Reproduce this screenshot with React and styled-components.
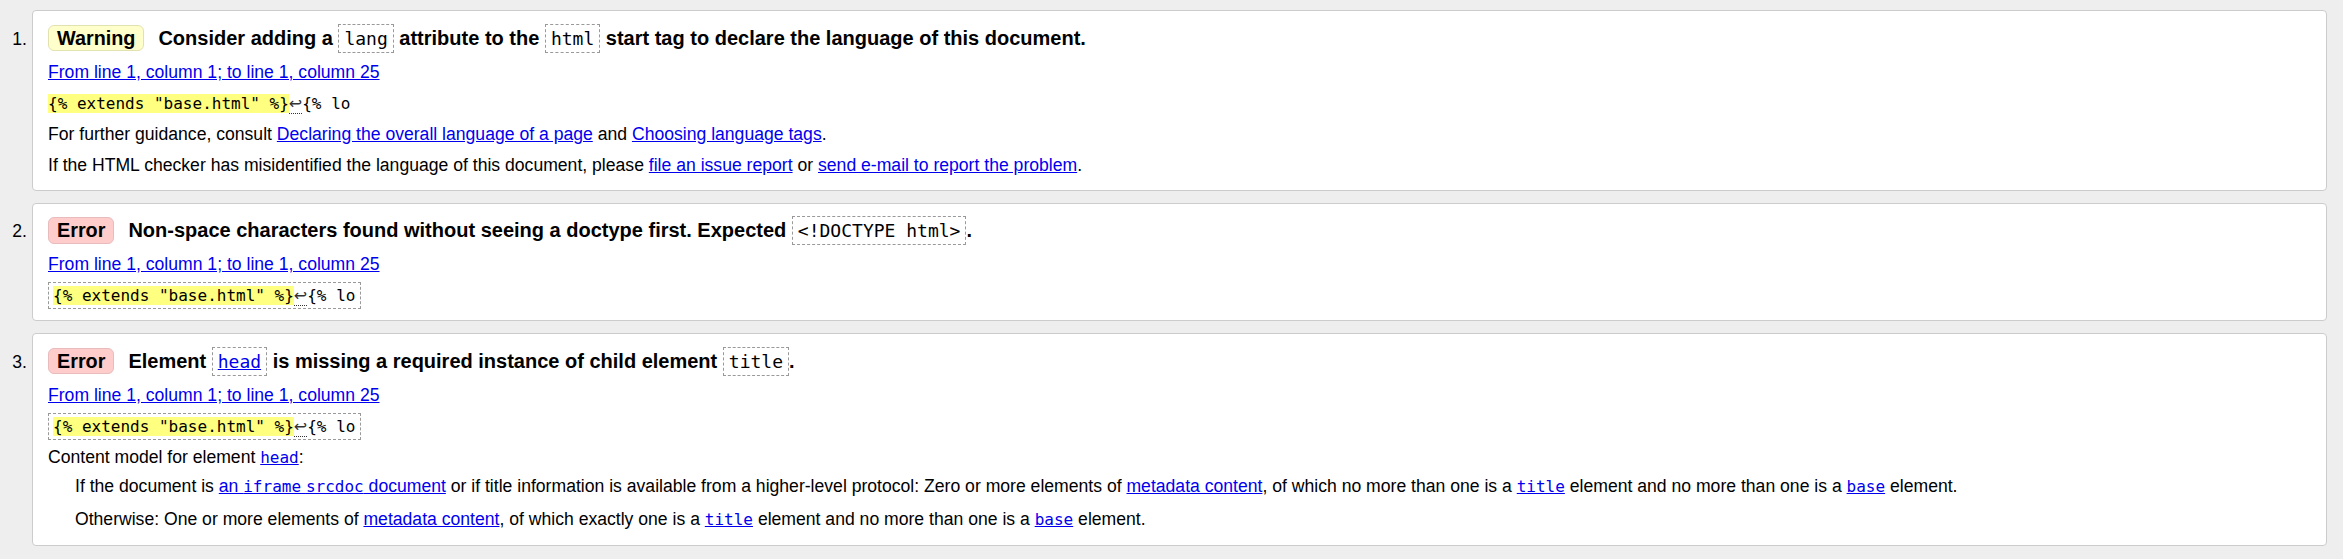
import styled, { createGlobalStyle } from "styled-components";

const GlobalStyle = createGlobalStyle`
  body {
    margin: 0;
    background: #eee;
    color: #000;
    font-family: "Liberation Sans", Arial, sans-serif;
    font-size: 17.6px;
  }
`;

const MessageList = styled.ol`
  list-style: none;
  margin: 10px 16px 0 0;
  padding: 0;
  display: flex;
  flex-direction: column;
  gap: 12px;
`;

const MessageItem = styled.li`
  display: grid;
  grid-template-columns: 32px 1fr;
  align-items: baseline;
`;

const Num = styled.span`
  text-align: right;
  padding-right: 5px;
  line-height: 1;
`;

const Card = styled.div`
  background: #fff;
  border: 1px solid #ccc;
  border-radius: 4px;
  padding: 12.5px 15px 14px;
`;

const Title = styled.p`
  margin: 0;
  font-weight: bold;
  font-size: 20px;
  line-height: 28px;
`;

const Badge = styled.strong`
  display: inline-block;
  margin-right: 14px;
  padding: 1px 8px;
  font-size: 19.8px;
  line-height: 22.5px;
  border-radius: 6px;
  border: 1px solid ${(p) => (p.$kind === "error" ? "#e8bcbc" : "#e2e2b0")};
  background: ${(p) => (p.$kind === "error" ? "#ffcccc" : "#ffffcc")};
`;

const Para = styled.p`
  margin: 9px 0 0;
  line-height: 22px;
`;

const Link = styled.a`
  color: #0000ee;
  text-decoration: underline;
`;

const Code = styled.code`
  font-family: "DejaVu Sans Mono", "Liberation Mono", monospace;
  font-weight: normal;
  font-size: 16px;
  line-height: 1;
`;

const TagBox = styled.code`
  font-family: "DejaVu Sans Mono", "Liberation Mono", monospace;
  font-weight: normal;
  font-size: 18px;
  line-height: 1;
  padding: 3px 5px;
  border: 1px dashed #999;
`;

const Extract = styled.code`
  font-family: "DejaVu Sans Mono", "Liberation Mono", monospace;
  font-size: 16px;
  line-height: 1;
  ${(p) =>
    p.$boxed &&
    `
    padding: 3px 5px 3px 4px;
    border: 1px dashed #999;
  `}
`;

const Mark = styled.b`
  font-weight: normal;
  background: #ffff80;
`;

const LineFeed = styled.span`
  font-family: "DejaVu Sans", sans-serif;
  color: #333;
  border-bottom: 1px dotted #333;
`;

const Dl = styled.dl`
  margin: 7px 0 1px;
`;

const Dd = styled.dd`
  margin: 0 0 0 27px;
  line-height: 22px;

  & + & {
    margin-top: 11px;
  }
`;

const Location = () => (
  <Para>
    <Link href="#">From line 1, column 1; to line 1, column 25</Link>
  </Para>
);

const ExtractLine = ({ boxed }) => (
  <Para>
    <Extract $boxed={boxed}>
      <Mark>{'{% extends "base.html" %}'}</Mark>
      <LineFeed>↩</LineFeed>
      {"{% lo"}
    </Extract>
  </Para>
);

export default function App() {
  return (
    <>
      <GlobalStyle />
      <MessageList>
        <MessageItem>
          <Num>1.</Num>
          <Card>
            <Title>
              <Badge $kind="warning">Warning</Badge>
              Consider adding a <TagBox>lang</TagBox> attribute to the{" "}
              <TagBox>html</TagBox> start tag to declare the language of this
              document.
            </Title>
            <Location />
            <ExtractLine />
            <Para>
              For further guidance, consult{" "}
              <Link href="#">Declaring the overall language of a page</Link> and{" "}
              <Link href="#">Choosing language tags</Link>.
            </Para>
            <Para>
              If the HTML checker has misidentified the language of this
              document, please <Link href="#">file an issue report</Link> or{" "}
              <Link href="#">send e-mail to report the problem</Link>.
            </Para>
          </Card>
        </MessageItem>

        <MessageItem>
          <Num>2.</Num>
          <Card>
            <Title>
              <Badge $kind="error">Error</Badge>
              Non-space characters found without seeing a doctype first.
              Expected <TagBox>{"<!DOCTYPE html>"}</TagBox>.
            </Title>
            <Location />
            <ExtractLine boxed />
          </Card>
        </MessageItem>

        <MessageItem>
          <Num>3.</Num>
          <Card>
            <Title>
              <Badge $kind="error">Error</Badge>
              Element{" "}
              <TagBox>
                <Link href="#">head</Link>
              </TagBox>{" "}
              is missing a required instance of child element{" "}
              <TagBox>title</TagBox>.
            </Title>
            <Location />
            <ExtractLine boxed />
            <Para>
              Content model for element{" "}
              <Link href="#">
                <Code>head</Code>
              </Link>
              :
            </Para>
            <Dl>
              <Dd>
                If the document is{" "}
                <Link href="#">
                  an <Code>iframe</Code> <Code>srcdoc</Code> document
                </Link>{" "}
                or if title information is available from a higher-level
                protocol: Zero or more elements of{" "}
                <Link href="#">metadata content</Link>, of which no more than
                one is a{" "}
                <Link href="#">
                  <Code>title</Code>
                </Link>{" "}
                element and no more than one is a{" "}
                <Link href="#">
                  <Code>base</Code>
                </Link>{" "}
                element.
              </Dd>
              <Dd>
                Otherwise: One or more elements of{" "}
                <Link href="#">metadata content</Link>, of which exactly one is
                a{" "}
                <Link href="#">
                  <Code>title</Code>
                </Link>{" "}
                element and no more than one is a{" "}
                <Link href="#">
                  <Code>base</Code>
                </Link>{" "}
                element.
              </Dd>
            </Dl>
          </Card>
        </MessageItem>
      </MessageList>
    </>
  );
}
